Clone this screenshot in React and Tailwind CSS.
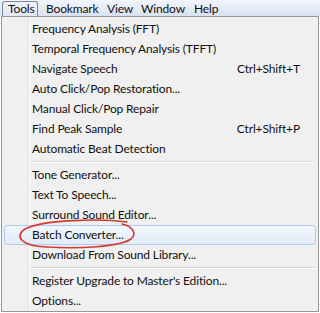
import React from 'react';

const menuFont = { fontFamily: '"Lato", "Noto Sans", sans-serif' };

const sections = [
    [
        { label: 'Frequency Analysis (FFT)' },
        { label: 'Temporal Frequency Analysis (TFFT)' },
        { label: 'Navigate Speech', shortcut: 'Ctrl+Shift+T' },
        { label: 'Auto Click/Pop Restoration...' },
        { label: 'Manual Click/Pop Repair' },
        { label: 'Find Peak Sample', shortcut: 'Ctrl+Shift+P' },
        { label: 'Automatic Beat Detection' },
    ],
    [
        { label: 'Tone Generator...' },
        { label: 'Text To Speech...' },
        { label: 'Surround Sound Editor...' },
        { label: 'Batch Converter...', active: true },
        { label: 'Download From Sound Library...' },
    ],
    [
        { label: "Register Upgrade to Master's Edition..." },
        { label: 'Options...' },
    ],
];

function MenuItem({ item }) {
    if (item.active) {
        return (
            <div className="h-[20px] mx-[2px] pl-[27px] pr-[15px] flex items-center justify-between rounded-[3px] border border-[#aecbef] bg-gradient-to-b from-[#f2f6fc] to-[#e2ebf8]">
                <span>{item.label}</span>
            </div>
        );
    }
    return (
        <div className="h-[20px] pl-[30px] pr-[18px] flex items-center justify-between">
            <span>{item.label}</span>
            {item.shortcut && <span>{item.shortcut}</span>}
        </div>
    );
}

function Separator() {
    return (
        <div className="h-[6px] flex items-center">
            <div className="ml-[28px] mr-[3px] flex-1 border-t border-b border-t-[#d7d7d7] border-b-white" />
        </div>
    );
}

export default function App() {
    return (
        <div className="relative w-[320px] h-[313px] bg-white overflow-hidden text-[12px] tracking-[-0.15px] text-[#111111]" style={menuFont}>
            {/* Menu bar */}
            <div className="h-[16px] flex items-end bg-gradient-to-b from-[#f3f5fb] to-[#d9e0f0]">
                <div className="ml-[2px] w-[36px] h-[15px] pl-[5px] flex items-center rounded-t-[3px] border border-b-0 border-[#7c8797] bg-gradient-to-b from-[#eef1f7] to-[#e2e7f1]">
                    Tools
                </div>
                <div className="ml-[8px] w-[61px] h-[15px] flex items-center">Bookmark</div>
                <div className="w-[34px] h-[15px] flex items-center">View</div>
                <div className="w-[53px] h-[15px] flex items-center">Window</div>
                <div className="h-[15px] flex items-center">Help</div>
            </div>

            {/* Tools dropdown */}
            <div className="ml-[1px] w-[318px] pt-[2px] border border-[#979797] bg-[#f0f0f0] bg-[linear-gradient(to_right,#f0f0f0_26px,#e2e3e3_26px,#e2e3e3_27px,#ffffff_27px,#ffffff_28px,#f0f0f0_28px)]">
                {sections.map((section, i) => (
                    <React.Fragment key={i}>
                        {i > 0 && <Separator />}
                        {section.map((item) => (
                            <MenuItem key={item.label} item={item} />
                        ))}
                    </React.Fragment>
                ))}
            </div>

            {/* hand-drawn circle around Batch Converter */}
            <svg className="absolute left-0 top-0 pointer-events-none" width="320" height="313" viewBox="0 0 320 313">
                <path
                    d="M127 222 C100 218, 42 220, 25 229 C14 236, 21 246, 46 247 C80 249, 119 247, 131 239 C137 234, 133 226, 122 224"
                    fill="none"
                    stroke="#d23b2f"
                    strokeWidth="1.6"
                    strokeLinecap="round"
                />
            </svg>
        </div>
    );
}
